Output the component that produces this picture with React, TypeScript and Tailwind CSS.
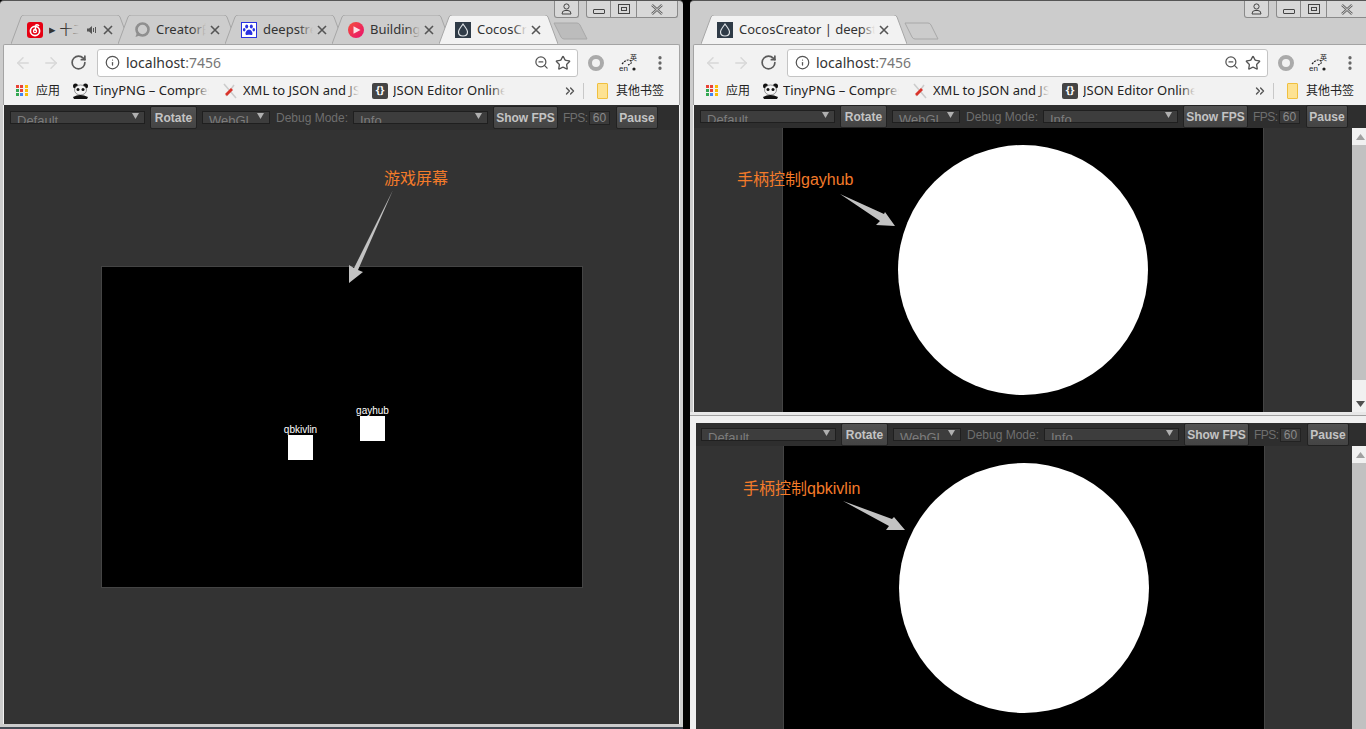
import React from "react";
import { ArrowLeft, ArrowRight, ChevronsRight, Info, MoreVertical, RotateCw, Star, ZoomOut } from "lucide-react";

const CJK = "font-['Noto_Sans','Noto_Sans_CJK_SC',sans-serif]";

function NeteaseIcon() {
  return (
    <svg width="16" height="16" viewBox="0 0 16 16" className="shrink-0">
      <rect width="16" height="16" rx="3" fill="#e60012" />
      <circle cx="8" cy="9" r="4.6" fill="none" stroke="#fff" strokeWidth="1.7" />
      <circle cx="8" cy="9" r="1.6" fill="none" stroke="#fff" strokeWidth="1.2" />
      <path d="M8 9 L9 3 Q11 2.4 12 4" fill="none" stroke="#fff" strokeWidth="1.5" />
    </svg>
  );
}

function CreatorIcon() {
  return (
    <svg width="16" height="16" viewBox="0 0 16 16" className="shrink-0">
      <circle cx="8.5" cy="7.5" r="6" fill="none" stroke="#8f8f8f" strokeWidth="2.6" />
      <path d="M1.5 15 L3.5 9 L7 13 Z" fill="#8f8f8f" />
    </svg>
  );
}

function PawIcon() {
  return (
    <svg width="16" height="16" viewBox="0 0 16 16" className="shrink-0">
      <rect x="0.5" y="0.5" width="15" height="15" fill="#fff" stroke="#2932e1" />
      <ellipse cx="5.7" cy="4.6" rx="1.5" ry="2" fill="#2932e1" />
      <ellipse cx="10.3" cy="4.6" rx="1.5" ry="2" fill="#2932e1" />
      <ellipse cx="3.2" cy="7.8" rx="1.3" ry="1.7" fill="#2932e1" />
      <ellipse cx="12.8" cy="7.8" rx="1.3" ry="1.7" fill="#2932e1" />
      <path d="M8 7.4 C10 7.4 12 10.5 11.4 12.2 C10.8 13.6 9 12.8 8 12.8 C7 12.8 5.2 13.6 4.6 12.2 C4 10.5 6 7.4 8 7.4 Z" fill="#2932e1" />
    </svg>
  );
}

function PlayIcon() {
  return (
    <svg width="16" height="16" viewBox="0 0 16 16" className="shrink-0">
      <defs>
        <linearGradient id="pl" x1="0" y1="0" x2="1" y2="1">
          <stop offset="0" stopColor="#f4503a" />
          <stop offset="1" stopColor="#e9106f" />
        </linearGradient>
      </defs>
      <circle cx="8" cy="8" r="8" fill="url(#pl)" />
      <path d="M5.5 4.2 L12.5 8 L5.5 11.8 Z" fill="#fff" opacity="0.85" />
    </svg>
  );
}

function CocosIcon() {
  return (
    <svg width="16" height="16" viewBox="0 0 16 16" className="shrink-0">
      <rect width="16" height="16" fill="#2f3b47" />
      <path d="M8 2 C10 5 12.5 7.5 12.5 10 C12.5 12.6 10.4 14 8 14 C5.6 14 3.5 12.6 3.5 10 C3.5 7.5 6 5 8 2 Z" fill="none" stroke="#dfe3e6" strokeWidth="1.2" />
    </svg>
  );
}

function SpeakerIcon() {
  return (
    <svg width="10" height="10" viewBox="0 0 10 10" className="ml-[8px] mr-[2px] shrink-0">
      <path d="M0 3.5 L2 3.5 L5 1 L5 9 L2 6.5 L0 6.5 Z" fill="#555" />
      <path d="M6.5 3 L6.5 7 M8.5 2 L8.5 8" stroke="#555" />
    </svg>
  );
}

function ChromeTab({ title, icon, active, width = 119, extra, textWidth }: { title: string; icon: React.ReactNode; active?: boolean; width?: number; extra?: React.ReactNode; textWidth: number }) {
  return (
    <div className={`relative h-[29px] shrink-0 ${active ? "z-10" : ""}`} style={{ width }}>
      <svg className="absolute inset-0" width={width} height="29">
        <path
          d={`M0 29 L10 2 Q11 0 13 0 L${width - 13} 0 Q${width - 11} 0 ${width - 10} 2 L${width} 29`}
          fill={active ? "#f2f2f2" : "#cdcdcd"}
          stroke="#a6a6a6"
        />
      </svg>
      <div className="relative flex h-full items-center pl-[16px] pt-[1px]">
        {icon}
        <div className={`relative ml-[6px] overflow-hidden whitespace-nowrap text-[13px] text-[#333] ${CJK}`} style={{ width: textWidth }}>
          {title}
          <div className={`absolute inset-y-0 right-0 w-[14px] bg-gradient-to-r from-transparent ${active ? "to-[#f2f2f2]" : "to-[#cdcdcd]"}`} />
        </div>
        {extra}
        <svg width="10" height="10" viewBox="0 0 10 10" className="ml-[4px] shrink-0">
          <path d="M1 1 L9 9 M9 1 L1 9" stroke="#555" strokeWidth="1.6" />
        </svg>
      </div>
    </div>
  );
}

function NewTab({ filled, className }: { filled?: boolean; className: string }) {
  return (
    <svg width="36" height="19" className={`mb-[3px] shrink-0 ${className}`}>
      <path d="M1 1 L24 1 Q26 1 27 3 L34 17 L11 17 Q9 17 8 15 Z" fill={filled ? "#bcbcbc" : "#cccccc"} stroke="#a8a8a8" />
    </svg>
  );
}

function WindowButtons() {
  return (
    <div className="absolute left-[554px] top-0 flex items-start">
      <div className="flex h-[17px] w-[25px] items-center justify-center rounded-b-[3px] border border-t-0 border-[#8a8a8a] bg-[#d8d8d8]">
        <svg width="11" height="12" viewBox="0 0 11 12">
          <circle cx="5.5" cy="3.5" r="2.6" fill="none" stroke="#444" />
          <path d="M1 11 Q1 7.5 4 7.5 L7 7.5 Q10 7.5 10 11 Z" fill="none" stroke="#444" />
        </svg>
      </div>
      <div className="ml-[7px] flex h-[17px] w-[92px] rounded-b-[3px] border border-t-0 border-[#8a8a8a] bg-[#d8d8d8]">
        <div className="flex w-[24px] items-center justify-center border-r border-[#8a8a8a]">
          <div className="mt-[4px] h-[5px] w-[12px] rounded-[1px] border border-[#444]" />
        </div>
        <div className="flex w-[26px] items-center justify-center border-r border-[#8a8a8a]">
          <div className="flex h-[10px] w-[12px] items-center justify-center border border-[#444]">
            <div className="h-[4px] w-[6px] border border-[#444]" />
          </div>
        </div>
        <div className="flex flex-1 items-center justify-center">
          <svg width="14" height="11" viewBox="0 0 14 11">
            <path d="M2 1 L12 10 M12 1 L2 10" stroke="#666" strokeWidth="2.4" />
            <path d="M2 1 L12 10 M12 1 L2 10" stroke="#eee" strokeWidth="0.8" />
          </svg>
        </div>
      </div>
    </div>
  );
}

function AppsIcon() {
  const colors = ["#ea4335", "#ea4335", "#fbbc05", "#34a853", "#ea4335", "#fbbc05", "#34a853", "#4285f4", "#fbbc05"];
  return (
    <div className="grid h-[12px] w-[12px] shrink-0 grid-cols-3 gap-[1px]">
      {colors.map((c, i) => (
        <div key={i} className="h-[3px] w-[3px]" style={{ background: c }} />
      ))}
    </div>
  );
}

function PandaIcon() {
  return (
    <svg width="17" height="16" viewBox="0 0 17 16" className="shrink-0">
      <circle cx="3.5" cy="3" r="2.5" fill="#111" />
      <circle cx="13.5" cy="3" r="2.5" fill="#111" />
      <ellipse cx="8.5" cy="7" rx="6" ry="5" fill="#f4f4f4" stroke="#555" strokeWidth="0.6" />
      <circle cx="6" cy="6.5" r="1.5" fill="#111" />
      <circle cx="11" cy="6.5" r="1.5" fill="#111" />
      <path d="M1 14 Q8 10 16 14 L15 16 L2 16 Z" fill="#111" />
    </svg>
  );
}

function XmlIcon() {
  return (
    <svg width="16" height="16" viewBox="0 0 16 16" className="shrink-0">
      <path d="M2 1 L14 15 M12 2 L4 13" stroke="#ccc" strokeWidth="1.6" />
      <path d="M3 11 L9 5 L11 7 L5 13 Z" fill="#d9342b" />
    </svg>
  );
}

function BookmarkText({ width, children }: { width: number; children: React.ReactNode }) {
  return (
    <div className={`relative overflow-hidden whitespace-nowrap text-[13px] text-[#222] ${CJK}`} style={{ width }}>
      {children}
      <div className="absolute inset-y-0 right-0 w-[14px] bg-gradient-to-r from-transparent to-[#f2f2f2]" />
    </div>
  );
}

function ExtensionIcon() {
  return (
    <svg width="20" height="18" viewBox="0 0 20 18" className="shrink-0">
      <path d="M3 10 Q8 4 12 7 Q14 9 9 11" fill="none" stroke="#222" strokeWidth="1.2" strokeDasharray="2 1" />
      <text x="0" y="17" fontSize="8" fontFamily="Liberation Sans" fill="#222">en</text>
      <text x="11" y="6" fontSize="7" fontFamily="Noto Sans CJK SC" fill="#222">英</text>
      <circle cx="15" cy="15" r="1.6" fill="#222" />
    </svg>
  );
}

function BrowserBars() {
  return (
    <div className="rounded-t-[2px] border border-b-0 border-[#a4a4a4] bg-[#f2f2f2]">
      <div className="flex h-[33px] items-center pl-[10px] pt-[2px]">
        <ArrowLeft size={18} strokeWidth={2} className="text-[#d8d8d8]" />
        <ArrowRight size={18} strokeWidth={2} className="ml-[10px] text-[#d8d8d8]" />
        <RotateCw size={17} strokeWidth={2.4} className="ml-[10px] text-[#5a5a5a]" />
        <div className="ml-[10px] flex h-[28px] w-[481px] items-center rounded-[3px] border border-[#c4c4c4] bg-white pl-[7px] pr-[6px]">
          <Info size={15} strokeWidth={2} className="text-[#555]" />
          <span className={`ml-[6px] text-[14px] text-[#333] ${CJK}`}>
            localhost<span className="text-[#777]">:7456</span>
          </span>
          <ZoomOut size={15} strokeWidth={2} className="ml-auto text-[#555]" />
          <Star size={16} strokeWidth={2} className="ml-[6px] text-[#555]" />
        </div>
        <div className="ml-[10px] h-[16px] w-[16px] rounded-full border-[4px] border-[#aaaaaa]" />
        <div className="ml-[15px] w-[20px]">
          <ExtensionIcon />
        </div>
        <MoreVertical size={18} strokeWidth={2.4} className="ml-[12px] text-[#666]" />
      </div>
      <div className="flex h-[27px] items-center pb-[2px] pl-[12px]">
        <AppsIcon />
        <span className={`ml-[8px] w-[30px] text-[12px] text-[#222] ${CJK}`}>应用</span>
        <div className="ml-[6px]">
          <PandaIcon />
        </div>
        <div className="ml-[4px]">
          <BookmarkText width={116}>TinyPNG – Compress PNG</BookmarkText>
        </div>
        <div className="ml-[13px]">
          <XmlIcon />
        </div>
        <div className="ml-[5px]">
          <BookmarkText width={116}>XML to JSON and JSON to</BookmarkText>
        </div>
        <div className="ml-[13px] flex h-[16px] w-[16px] shrink-0 items-center justify-center rounded-[2px] bg-[#444] text-[11px] font-bold text-white">
          {"{}"}
        </div>
        <div className="ml-[5px]">
          <BookmarkText width={112}>JSON Editor Online</BookmarkText>
        </div>
        <ChevronsRight size={14} strokeWidth={2.4} className="ml-[58px] text-[#555]" />
        <div className="ml-[6px] h-[16px] w-px bg-[#c8c8c8]" />
        <div className="ml-[13px] h-[16px] w-[11px] rounded-[1px] border border-[#f0c040] bg-[#fde293]" />
        <span className={`ml-[8px] whitespace-nowrap text-[12px] text-[#222] ${CJK}`}>其他书签</span>
      </div>
    </div>
  );
}

function DebugSelect({ label, width }: { label: string; width: string }) {
  return (
    <div className={`relative flex h-[13px] shrink-0 items-start overflow-hidden border border-[#1f1f1f] bg-[#3d3d3d] pl-[6px] text-[13px] leading-[18px] text-[#7c7c7c] ${width}`}>
      {label}
      <svg width="7" height="6" viewBox="0 0 7 6" className="absolute right-[5px] top-[1px]">
        <path d="M0 0 L7 0 L3.5 6 Z" fill="#b0b0b0" />
      </svg>
    </div>
  );
}

function DebugButton({ label, width }: { label: string; width: string }) {
  return (
    <div className={`flex h-[23px] shrink-0 items-center justify-center rounded-[2px] border border-[#222] bg-gradient-to-b from-[#525252] to-[#444] text-[12px] font-bold text-[#c4c4c4] ${width}`}>
      {label}
    </div>
  );
}

function DebugBar({ pl, h = "h-[23px]" }: { pl: string; h?: string }) {
  return (
    <div className={`flex shrink-0 items-center bg-[#2e2e2e] font-['Liberation_Sans',sans-serif] ${pl} ${h}`}>
      <DebugSelect label="Default" width="w-[135px]" />
      <div className="ml-[5px]">
        <DebugButton label="Rotate" width="w-[47px]" />
      </div>
      <div className="ml-[5px]">
        <DebugSelect label="WebGL" width="w-[68px]" />
      </div>
      <span className="ml-[6px] mt-[1px] w-[77px] whitespace-nowrap text-[12px] text-[#6e6e6e]">Debug Mode:</span>
      <DebugSelect label="Info" width="w-[135px]" />
      <div className="ml-[5px]">
        <DebugButton label="Show FPS" width="w-[65px]" />
      </div>
      <span className="ml-[5px] mt-[1px] w-[26px] text-[12px] tracking-[-0.5px] text-[#6e6e6e]">FPS:</span>
      <div className="flex h-[14px] w-[21px] items-center justify-center border border-[#222] bg-[#3a3a3a] text-[12px] text-[#8a8a8a]">60</div>
      <div className="ml-[6px]">
        <DebugButton label="Pause" width="w-[42px]" />
      </div>
    </div>
  );
}

function ScrollBar({ thumbHeight, bottomArrow }: { thumbHeight: string; bottomArrow?: boolean }) {
  return (
    <div className="relative w-[17px] shrink-0 bg-[#f1f1f1]">
      <svg width="9" height="6" viewBox="0 0 9 6" className="absolute left-[4px] top-[6px]">
        <path d="M4.5 0 L9 6 L0 6 Z" fill="#a0a0a0" />
      </svg>
      <div className={`absolute left-0 top-[17px] w-[17px] bg-[#c1c1c1] ${thumbHeight}`} />
      {bottomArrow && (
        <svg width="9" height="6" viewBox="0 0 9 6" className="absolute bottom-[5px] left-[4px]">
          <path d="M0 0 L9 0 L4.5 6 Z" fill="#505050" />
        </svg>
      )}
    </div>
  );
}

function Note({ children, className }: { children: React.ReactNode; className: string }) {
  return (
    <span className={`absolute whitespace-nowrap text-[16px] leading-[20px] text-[#f47b2a] font-['Liberation_Sans','Noto_Sans_CJK_SC',sans-serif] ${className}`}>
      {children}
    </span>
  );
}

function Arrow({ points }: { points: string }) {
  return (
    <svg className="absolute left-0 top-0" width="683" height="729">
      <polygon points={points} fill="#c2c2c2" />
    </svg>
  );
}

function GameNode({ name, className }: { name: string; className: string }) {
  return (
    <div className={`absolute h-[25px] w-[25px] bg-white ${className}`}>
      <span className="absolute bottom-[25px] left-1/2 -translate-x-1/2 whitespace-nowrap font-['Liberation_Sans',sans-serif] text-[10px] leading-[11px] text-white">
        {name}
      </span>
    </div>
  );
}

function JoystickPage({ barPl, thumbHeight, bottomArrow }: { barPl: string; thumbHeight: string; bottomArrow?: boolean }) {
  return (
    <div className="flex min-h-0 flex-1 flex-col bg-[#333]">
      <DebugBar pl={barPl} />
      <div className="flex min-h-0 flex-1">
        <div className="flex min-w-0 flex-1 justify-center overflow-hidden">
          <div className="flex h-[320px] w-[482px] shrink-0 justify-center border-x border-[#444] bg-black pt-[17px]">
            <div className="h-[250px] w-[250px] rounded-full bg-white" />
          </div>
        </div>
        <ScrollBar thumbHeight={thumbHeight} bottomArrow={bottomArrow} />
      </div>
    </div>
  );
}

export default function App() {
  return (
    <div className="relative h-[729px] w-[1366px] overflow-hidden bg-black">
      <div className="absolute bottom-0 left-0 h-[2px] w-[683px] bg-[#444b55]" />

      {/* left browser: game screen */}
      <div className="absolute left-0 top-0 flex h-[727px] w-[683px] flex-col overflow-hidden rounded-t-[4px] border-t border-[#555] bg-[#cccccc] px-[3px]">
        <WindowButtons />
        <div className="flex h-[43px] shrink-0 items-end pl-[8px]">
          <ChromeTab title="▸ 十二" icon={<NeteaseIcon />} textWidth={30} extra={<SpeakerIcon />} />
          <div className="-ml-[12px]">
            <ChromeTab title="Creator的" icon={<CreatorIcon />} textWidth={50} />
          </div>
          <div className="-ml-[12px]">
            <ChromeTab title="deepstream" icon={<PawIcon />} textWidth={50} />
          </div>
          <div className="-ml-[12px]">
            <ChromeTab title="Building" icon={<PlayIcon />} textWidth={50} />
          </div>
          <div className="-ml-[12px]">
            <ChromeTab title="CocosCreator" icon={<CocosIcon />} active textWidth={50} />
          </div>
          <NewTab filled className="-ml-[5px]" />
        </div>
        <BrowserBars />
        <div className="mb-[3px] flex min-h-0 flex-1 flex-col border-x border-[#f2f2f2] bg-[#333]">
          <DebugBar pl="pl-[6px]" h="h-[25px]" />
          <div className="flex flex-1 items-center justify-center pl-[1px]">
            <div className="relative h-[322px] w-[482px] border border-[#444] bg-black">
              <GameNode name="qbkivlin" className="left-[186px] top-[168px]" />
              <GameNode name="gayhub" className="left-[258px] top-[149px]" />
            </div>
          </div>
        </div>
        <Note className="left-[384px] top-[168px]">游戏屏幕</Note>
        <Arrow points="393,189 358,269 363,271 349,282 349,264 354,267" />
      </div>

      {/* right top browser */}
      <div className="absolute left-[690px] top-0 flex h-[412px] w-[683px] flex-col overflow-hidden rounded-t-[4px] border-t border-[#555] bg-[#cccccc] pl-[3px] pr-[4px]">
        <WindowButtons />
        <div className="flex h-[43px] shrink-0 items-end pl-[8px]">
          <ChromeTab title="CocosCreator | deepstream" icon={<CocosIcon />} active width={206} textWidth={136} />
          <NewTab className="-ml-[3px]" />
        </div>
        <BrowserBars />
        <div className="flex min-h-0 flex-1 flex-col border-l border-[#f2f2f2]">
          <JoystickPage barPl="pl-[6px]" thumbHeight="h-[235px]" bottomArrow />
        </div>
        <Note className="left-[47px] top-[169px]">手柄控制gayhub</Note>
        <Arrow points="150,193 194,213 195,211 205,225 186,224 190,220" />
      </div>

      {/* right bottom page, chrome hidden behind the top window */}
      <div className="absolute left-[690px] top-[412px] flex h-[317px] w-[683px] flex-col overflow-hidden border-t-[3px] border-[#e8e8e8] bg-[#f0f0f0] pl-[6px] pr-[4px]">
        <div className="-ml-[6px] -mr-[4px] h-px shrink-0 bg-[#a0a0a0]" />
        <div className="flex min-h-0 flex-1 flex-col pt-[7px]">
          <JoystickPage barPl="pl-[5px]" thumbHeight="h-[270px]" />
        </div>
        <Note className="left-[53px] top-[64px]">手柄控制qbkivlin</Note>
        <Arrow points="153,86 202,104 204,102 215,115 196,115 199,111" />
      </div>
    </div>
  );
}
